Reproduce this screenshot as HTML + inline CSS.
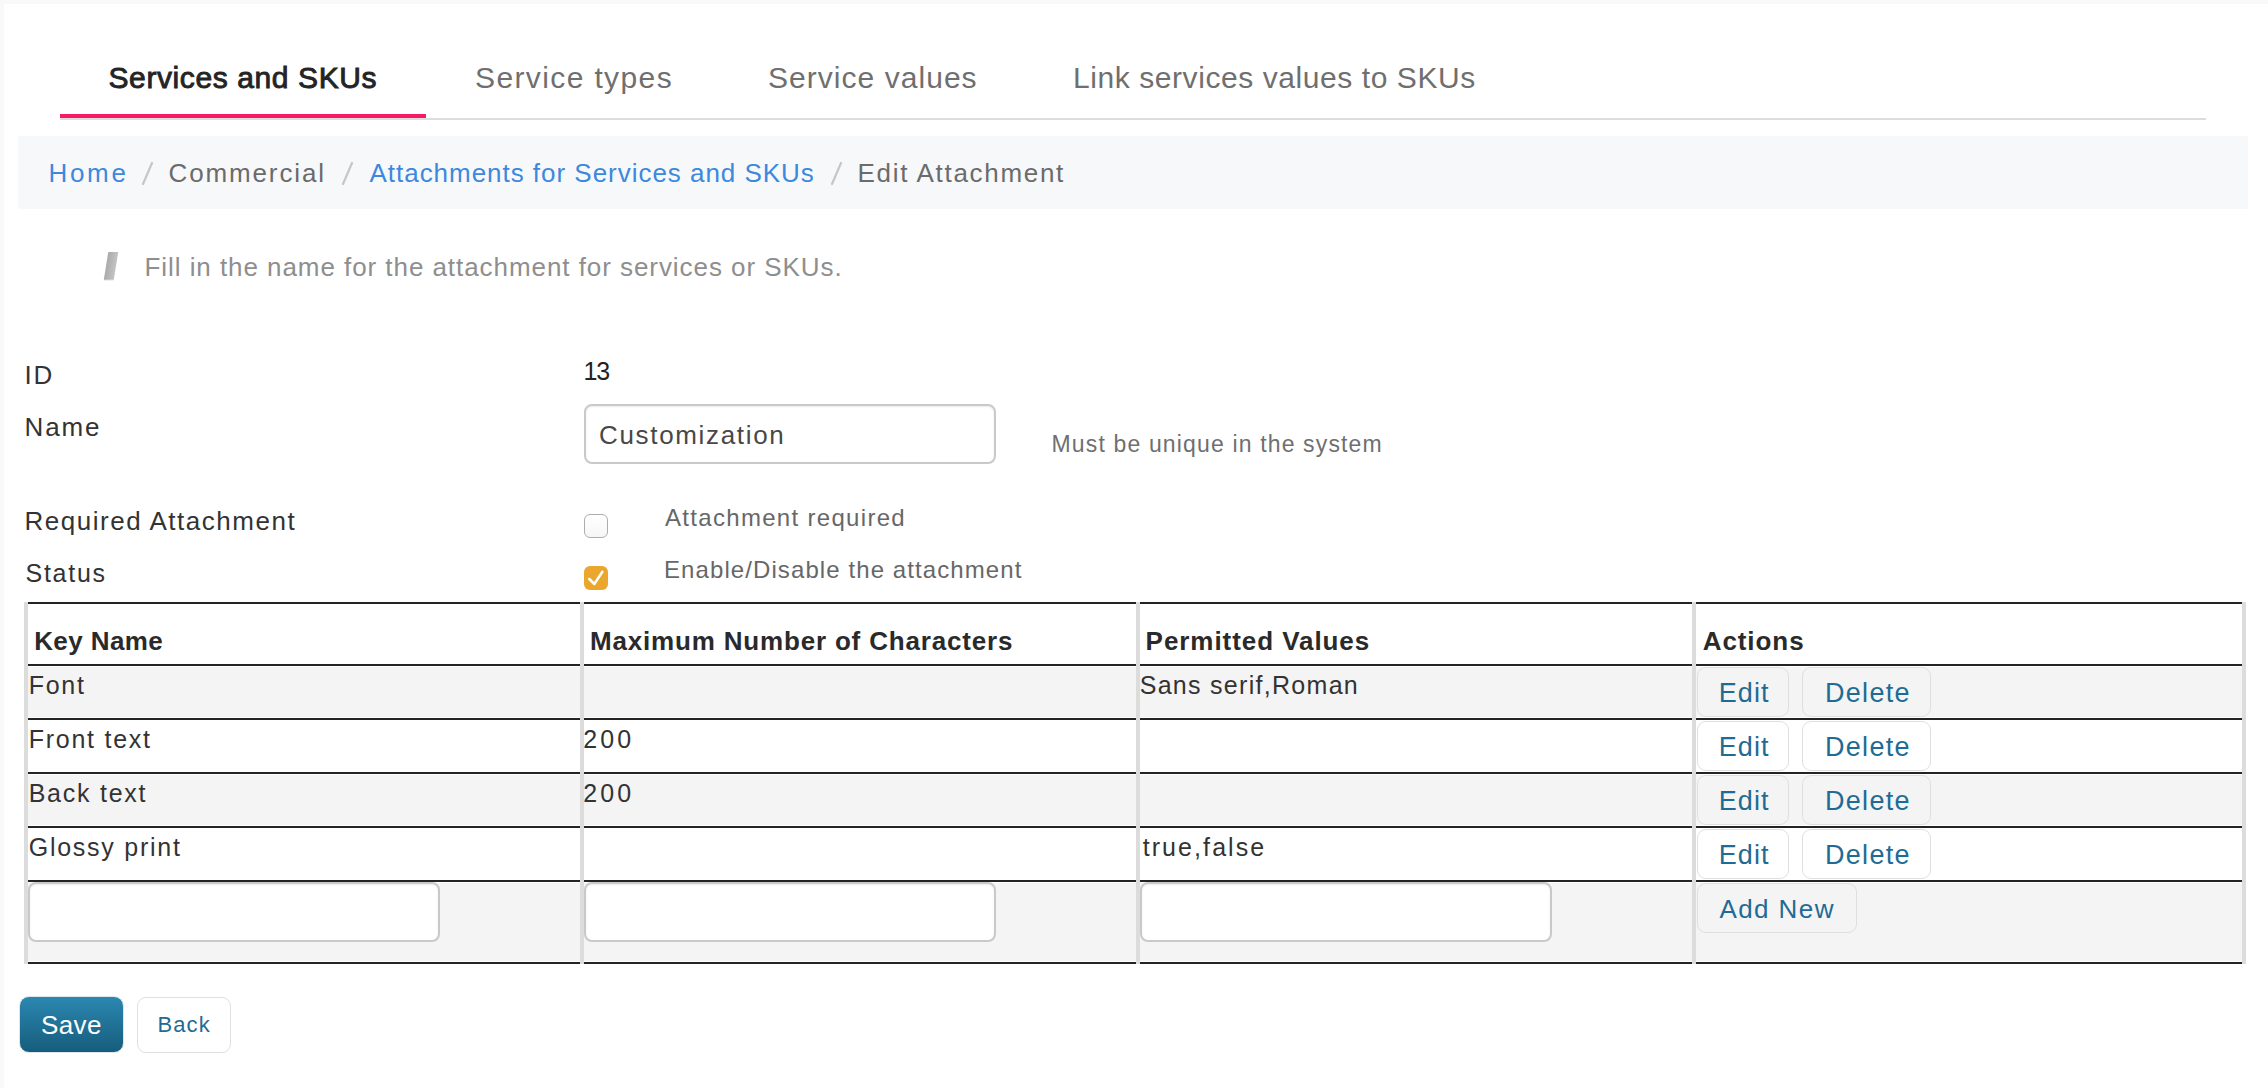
<!DOCTYPE html><html><head><meta charset="utf-8"><title>Edit Attachment</title><style>
*{box-sizing:border-box;margin:0;padding:0}
html,body{width:2268px;height:1088px;overflow:hidden;background:#fff}
body{position:relative;font-family:"Liberation Sans",sans-serif}
.a{position:absolute}
.t{position:absolute;white-space:nowrap;font-family:"Liberation Sans",sans-serif}
.cell{position:absolute;border-top:0;border-bottom:2px solid #232323}
.btn{position:absolute;border:1.6px solid #dfdfdf;border-radius:9px}
.inp{position:absolute;background:#fff;border:2px solid #c9c9c9;border-radius:8px;box-shadow:inset 0 1px 2px rgba(0,0,0,.08)}
</style></head><body>
<div class="a" style="left:0;top:0;width:2268px;height:4px;background:#f9f9f9"></div>
<div class="a" style="left:0;top:0;width:4px;height:1088px;background:#f9f9f9"></div>
<div class="a" style="left:60px;top:118px;width:2146px;height:2px;background:#dcdcdc"></div>
<div class="a" style="left:60px;top:114px;width:366px;height:4px;background:#f81a63"></div>
<div class="a" style="left:18px;top:136px;width:2230px;height:73px;background:#f7f8fa"></div>
<div class="a" style="left:106px;top:252px;width:9.5px;height:28px;background:linear-gradient(90deg,#aaa,#c4c4c4);transform:skewX(-9.1deg);filter:blur(0.6px)"></div>
<svg class="a" style="left:138px;top:158px" width="20" height="32" viewBox="0 0 20 32"><line x1="14" y1="5" x2="5" y2="26" stroke="#c6c6c6" stroke-width="2.2" stroke-linecap="round"/></svg>
<svg class="a" style="left:338px;top:158px" width="20" height="32" viewBox="0 0 20 32"><line x1="14" y1="5" x2="5" y2="26" stroke="#c6c6c6" stroke-width="2.2" stroke-linecap="round"/></svg>
<svg class="a" style="left:827px;top:158px" width="20" height="32" viewBox="0 0 20 32"><line x1="14" y1="5" x2="5" y2="26" stroke="#c6c6c6" stroke-width="2.2" stroke-linecap="round"/></svg>
<div class="inp" style="left:584px;top:404px;width:412px;height:60px"></div>
<div class="a" style="left:584px;top:514px;width:24px;height:24px;border:1.6px solid #adadad;border-radius:6px;background:linear-gradient(#fff,#f6f6f6)"></div>
<div class="a" style="left:584px;top:566px;width:24px;height:24px;border-radius:6px;background:#eba62e"></div>
<svg class="a" style="left:584px;top:566px" width="24" height="24" viewBox="0 0 24 24"><polyline points="5.3,13 10.3,18 18.4,5.8" fill="none" stroke="#fff" stroke-width="2.5" stroke-linecap="round" stroke-linejoin="round"/></svg>
<div class="a" style="left:24px;top:602px;width:2222px;height:362px;background:#dcdcdc"></div>
<div class="cell" style="left:28px;top:602px;width:552px;height:64px;background:#fff;border-top:2px solid #232323;"></div>
<div class="cell" style="left:584px;top:602px;width:552px;height:64px;background:#fff;border-top:2px solid #232323;"></div>
<div class="cell" style="left:1140px;top:602px;width:552px;height:64px;background:#fff;border-top:2px solid #232323;"></div>
<div class="cell" style="left:1696px;top:602px;width:546px;height:64px;background:#fff;border-top:2px solid #232323;"></div>
<div class="cell" style="left:28px;top:666px;width:552px;height:54px;background:#f4f4f4;box-shadow:inset 0 1px 0 #fff,inset 0 -1px 0 #fff;"></div>
<div class="cell" style="left:584px;top:666px;width:552px;height:54px;background:#f4f4f4;box-shadow:inset 0 1px 0 #fff,inset 0 -1px 0 #fff;"></div>
<div class="cell" style="left:1140px;top:666px;width:552px;height:54px;background:#f4f4f4;box-shadow:inset 0 1px 0 #fff,inset 0 -1px 0 #fff;"></div>
<div class="cell" style="left:1696px;top:666px;width:546px;height:54px;background:#f4f4f4;box-shadow:inset 0 1px 0 #fff,inset 0 -1px 0 #fff;"></div>
<div class="cell" style="left:28px;top:720px;width:552px;height:54px;background:#fff;"></div>
<div class="cell" style="left:584px;top:720px;width:552px;height:54px;background:#fff;"></div>
<div class="cell" style="left:1140px;top:720px;width:552px;height:54px;background:#fff;"></div>
<div class="cell" style="left:1696px;top:720px;width:546px;height:54px;background:#fff;"></div>
<div class="cell" style="left:28px;top:774px;width:552px;height:54px;background:#f4f4f4;box-shadow:inset 0 1px 0 #fff,inset 0 -1px 0 #fff;"></div>
<div class="cell" style="left:584px;top:774px;width:552px;height:54px;background:#f4f4f4;box-shadow:inset 0 1px 0 #fff,inset 0 -1px 0 #fff;"></div>
<div class="cell" style="left:1140px;top:774px;width:552px;height:54px;background:#f4f4f4;box-shadow:inset 0 1px 0 #fff,inset 0 -1px 0 #fff;"></div>
<div class="cell" style="left:1696px;top:774px;width:546px;height:54px;background:#f4f4f4;box-shadow:inset 0 1px 0 #fff,inset 0 -1px 0 #fff;"></div>
<div class="cell" style="left:28px;top:828px;width:552px;height:54px;background:#fff;"></div>
<div class="cell" style="left:584px;top:828px;width:552px;height:54px;background:#fff;"></div>
<div class="cell" style="left:1140px;top:828px;width:552px;height:54px;background:#fff;"></div>
<div class="cell" style="left:1696px;top:828px;width:546px;height:54px;background:#fff;"></div>
<div class="cell" style="left:28px;top:882px;width:552px;height:82px;background:#f4f4f4;box-shadow:inset 0 1px 0 #fff,inset 0 -1px 0 #fff;"></div>
<div class="cell" style="left:584px;top:882px;width:552px;height:82px;background:#f4f4f4;box-shadow:inset 0 1px 0 #fff,inset 0 -1px 0 #fff;"></div>
<div class="cell" style="left:1140px;top:882px;width:552px;height:82px;background:#f4f4f4;box-shadow:inset 0 1px 0 #fff,inset 0 -1px 0 #fff;"></div>
<div class="cell" style="left:1696px;top:882px;width:546px;height:82px;background:#f4f4f4;box-shadow:inset 0 1px 0 #fff,inset 0 -1px 0 #fff;"></div>
<div class="btn" style="left:1697px;top:667px;width:92px;height:50px"></div>
<div class="btn" style="left:1802px;top:667px;width:129px;height:50px"></div>
<div class="btn" style="left:1697px;top:721px;width:92px;height:50px"></div>
<div class="btn" style="left:1802px;top:721px;width:129px;height:50px"></div>
<div class="btn" style="left:1697px;top:775px;width:92px;height:50px"></div>
<div class="btn" style="left:1802px;top:775px;width:129px;height:50px"></div>
<div class="btn" style="left:1697px;top:829px;width:92px;height:50px"></div>
<div class="btn" style="left:1802px;top:829px;width:129px;height:50px"></div>
<div class="btn" style="left:1697px;top:883px;width:160px;height:50px"></div>
<div class="inp" style="left:28px;top:882px;width:412px;height:60px"></div>
<div class="inp" style="left:584px;top:882px;width:412px;height:60px"></div>
<div class="inp" style="left:1140px;top:882px;width:412px;height:60px"></div>
<div class="a" style="left:18.5px;top:996px;width:105px;height:57px;border-radius:10px;background:linear-gradient(#2b87b1,#165d7c);border:1.5px solid #dfe6e9"></div>
<div class="btn" style="left:137px;top:997px;width:94px;height:56px;background:#fff"></div>
<div class="t" id="tab1" style="left:108.5px;top:63.4px;font-size:30px;line-height:30px;letter-spacing:0.60px;color:#242424;font-weight:400;font-style:normal;-webkit-text-stroke:0.9px #242424;">Services and SKUs</div>
<div class="t" id="tab2" style="left:475.0px;top:63.0px;font-size:30px;line-height:30px;letter-spacing:1.38px;color:#6f6f6f;font-weight:400;font-style:normal;">Service types</div>
<div class="t" id="tab3" style="left:768.0px;top:63.0px;font-size:30px;line-height:30px;letter-spacing:1.04px;color:#6f6f6f;font-weight:400;font-style:normal;">Service values</div>
<div class="t" id="tab4" style="left:1073.0px;top:63.0px;font-size:30px;line-height:30px;letter-spacing:0.57px;color:#6f6f6f;font-weight:400;font-style:normal;">Link services values to SKUs</div>
<div class="t" id="bc1" style="left:48.5px;top:160.2px;font-size:26px;line-height:26px;letter-spacing:2.67px;color:#3d88de;font-weight:400;font-style:normal;">Home</div>
<div class="t" id="bc2" style="left:168.5px;top:160.2px;font-size:26px;line-height:26px;letter-spacing:1.87px;color:#6b6b6b;font-weight:400;font-style:normal;">Commercial</div>
<div class="t" id="bc3" style="left:369.5px;top:160.2px;font-size:26px;line-height:26px;letter-spacing:0.97px;color:#3d88de;font-weight:400;font-style:normal;">Attachments for Services and SKUs</div>
<div class="t" id="bc4" style="left:857.5px;top:160.2px;font-size:26px;line-height:26px;letter-spacing:1.69px;color:#6b6b6b;font-weight:400;font-style:normal;">Edit Attachment</div>
<div class="t" id="hint" style="left:144.5px;top:254.1px;font-size:26px;line-height:26px;letter-spacing:0.94px;color:#8e8e8e;font-weight:400;font-style:normal;">Fill in the name for the attachment for services or SKUs.</div>
<div class="t" id="lid" style="left:24.5px;top:362.1px;font-size:26px;line-height:26px;letter-spacing:1.90px;color:#333;font-weight:400;font-style:normal;">ID</div>
<div class="t" id="lname" style="left:24.5px;top:414.0px;font-size:26px;line-height:26px;letter-spacing:1.90px;color:#333;font-weight:400;font-style:normal;">Name</div>
<div class="t" id="lreq" style="left:24.5px;top:508.2px;font-size:26px;line-height:26px;letter-spacing:1.52px;color:#333;font-weight:400;font-style:normal;">Required Attachment</div>
<div class="t" id="lstat" style="left:25.5px;top:561.0px;font-size:25px;line-height:25px;letter-spacing:1.74px;color:#333;font-weight:400;font-style:normal;">Status</div>
<div class="t" id="v13" style="left:583.5px;top:359.0px;font-size:25px;line-height:25px;letter-spacing:-1.20px;color:#222;font-weight:400;font-style:normal;">13</div>
<div class="t" id="cust" style="left:599.0px;top:422.0px;font-size:26px;line-height:26px;letter-spacing:1.67px;color:#484848;font-weight:400;font-style:normal;">Customization</div>
<div class="t" id="must" style="left:1051.5px;top:432.7px;font-size:23px;line-height:23px;letter-spacing:1.15px;color:#6f6f6f;font-weight:400;font-style:normal;">Must be unique in the system</div>
<div class="t" id="areq" style="left:665.0px;top:506.2px;font-size:24px;line-height:24px;letter-spacing:1.31px;color:#676767;font-weight:400;font-style:normal;">Attachment required</div>
<div class="t" id="ena" style="left:664.0px;top:558.1px;font-size:24px;line-height:24px;letter-spacing:1.09px;color:#676767;font-weight:400;font-style:normal;">Enable/Disable the attachment</div>
<div class="t" id="th1" style="left:34.2px;top:628.0px;font-size:26px;line-height:26px;letter-spacing:0.40px;color:#2a2a2a;font-weight:700;font-style:normal;">Key Name</div>
<div class="t" id="th2" style="left:590.0px;top:628.0px;font-size:26px;line-height:26px;letter-spacing:0.82px;color:#2a2a2a;font-weight:700;font-style:normal;">Maximum Number of Characters</div>
<div class="t" id="th3" style="left:1145.6px;top:628.0px;font-size:26px;line-height:26px;letter-spacing:0.94px;color:#2a2a2a;font-weight:700;font-style:normal;">Permitted Values</div>
<div class="t" id="th4" style="left:1702.7px;top:628.0px;font-size:26px;line-height:26px;letter-spacing:0.93px;color:#2a2a2a;font-weight:700;font-style:normal;">Actions</div>
<div class="t" id="r0a" style="left:28.7px;top:672.6px;font-size:25px;line-height:25px;letter-spacing:1.75px;color:#333;font-weight:400;font-style:normal;">Font</div>
<div class="t" id="r0c" style="left:1139.7px;top:672.6px;font-size:25px;line-height:25px;letter-spacing:1.29px;color:#333;font-weight:400;font-style:normal;">Sans serif,Roman</div>
<div class="t" id="e0" style="left:1718.7px;top:680.2px;font-size:27px;line-height:27px;letter-spacing:1.10px;color:#1f6b95;font-weight:400;font-style:normal;">Edit</div>
<div class="t" id="d0" style="left:1825.0px;top:680.2px;font-size:27px;line-height:27px;letter-spacing:1.30px;color:#1f6b95;font-weight:400;font-style:normal;">Delete</div>
<div class="t" id="r1a" style="left:28.7px;top:726.6px;font-size:25px;line-height:25px;letter-spacing:1.75px;color:#333;font-weight:400;font-style:normal;">Front text</div>
<div class="t" id="r1b" style="left:583.3px;top:726.6px;font-size:25px;line-height:25px;letter-spacing:3.10px;color:#333;font-weight:400;font-style:normal;">200</div>
<div class="t" id="e1" style="left:1718.7px;top:734.2px;font-size:27px;line-height:27px;letter-spacing:1.10px;color:#1f6b95;font-weight:400;font-style:normal;">Edit</div>
<div class="t" id="d1" style="left:1825.0px;top:734.2px;font-size:27px;line-height:27px;letter-spacing:1.30px;color:#1f6b95;font-weight:400;font-style:normal;">Delete</div>
<div class="t" id="r2a" style="left:28.7px;top:780.6px;font-size:25px;line-height:25px;letter-spacing:1.75px;color:#333;font-weight:400;font-style:normal;">Back text</div>
<div class="t" id="r2b" style="left:583.3px;top:780.6px;font-size:25px;line-height:25px;letter-spacing:3.10px;color:#333;font-weight:400;font-style:normal;">200</div>
<div class="t" id="e2" style="left:1718.7px;top:788.2px;font-size:27px;line-height:27px;letter-spacing:1.10px;color:#1f6b95;font-weight:400;font-style:normal;">Edit</div>
<div class="t" id="d2" style="left:1825.0px;top:788.2px;font-size:27px;line-height:27px;letter-spacing:1.30px;color:#1f6b95;font-weight:400;font-style:normal;">Delete</div>
<div class="t" id="r3a" style="left:28.7px;top:834.6px;font-size:25px;line-height:25px;letter-spacing:1.75px;color:#333;font-weight:400;font-style:normal;">Glossy print</div>
<div class="t" id="r3c" style="left:1142.7px;top:834.6px;font-size:25px;line-height:25px;letter-spacing:2.08px;color:#333;font-weight:400;font-style:normal;">true,false</div>
<div class="t" id="e3" style="left:1718.7px;top:842.2px;font-size:27px;line-height:27px;letter-spacing:1.10px;color:#1f6b95;font-weight:400;font-style:normal;">Edit</div>
<div class="t" id="d3" style="left:1825.0px;top:842.2px;font-size:27px;line-height:27px;letter-spacing:1.30px;color:#1f6b95;font-weight:400;font-style:normal;">Delete</div>
<div class="t" id="add" style="left:1719.4px;top:896.0px;font-size:26px;line-height:26px;letter-spacing:1.43px;color:#1f6b95;font-weight:400;font-style:normal;">Add New</div>
<div class="t" id="save" style="left:41.0px;top:1012.0px;font-size:26px;line-height:26px;letter-spacing:0.40px;color:#ffffff;font-weight:400;font-style:normal;">Save</div>
<div class="t" id="back" style="left:157.5px;top:1014.3px;font-size:22px;line-height:22px;letter-spacing:1.10px;color:#1f6b95;font-weight:400;font-style:normal;">Back</div>
</body></html>
